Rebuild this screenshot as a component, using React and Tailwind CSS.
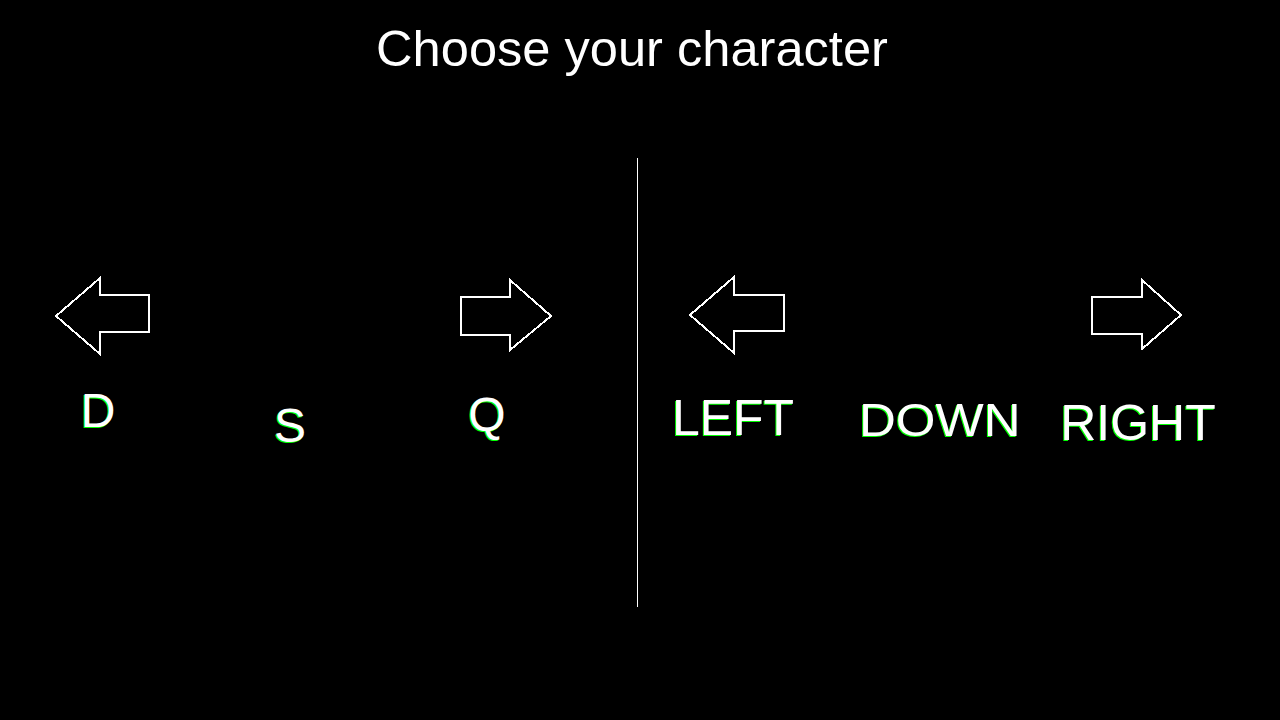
import React from "react";

const glow = "[text-shadow:-1px_1px_0_#00ff00]";

function Arrow({ points, w, h, className }) {
  return (
    <svg
      width={w}
      height={h}
      viewBox={`0 0 ${w} ${h}`}
      className={`shrink-0 ${className}`}
      shapeRendering="crispEdges"
    >
      <polygon points={points} fill="none" stroke="#fff" strokeWidth="2" strokeLinejoin="miter" />
    </svg>
  );
}

function App() {
  return (
    <div className="w-[1280px] h-[720px] bg-black overflow-hidden text-white font-['Liberation_Sans',Arial,sans-serif]">
      {/* title */}
      <div className="pt-[24px] w-[1264px] text-center text-[50.6px] leading-[50px]">
        Choose your character
      </div>

      {/* two players */}
      <div className="mt-[84px] flex h-[449px]">
        {/* player 1 */}
        <div className="w-[637px] flex flex-col pt-[117px]">
          <div className="flex items-start">
            <Arrow
              w={97}
              h={80}
              className="ml-[54px] mt-[1px]"
              points="2,40 46,2 46,19 95,19 95,56 46,56 46,78"
            />
            <Arrow
              w={94}
              h={74}
              className="ml-[308px] mt-[3px]"
              points="2,19 51,19 51,2 92,38 51,72 51,57 2,57"
            />
          </div>
          <div className={`flex items-start text-[48px] leading-none ${glow}`}>
            <div className="w-[100px] ml-[48px] mt-[31px] text-center">D</div>
            <div className="w-[100px] ml-[92px] mt-[46px] text-center">S</div>
            <div className="w-[100px] ml-[97px] mt-[35px] text-center">Q</div>
          </div>
        </div>

        <div className="w-px bg-white"></div>

        {/* player 2 */}
        <div className="flex-1 flex flex-col pt-[117px]">
          <div className="flex items-start">
            <Arrow
              w={97}
              h={80}
              className="ml-[50px]"
              points="2,40 46,2 46,20 96,20 96,56 46,56 46,78"
            />
            <Arrow
              w={93}
              h={72}
              className="ml-[305px] mt-[3px]"
              points="2,19 52,19 52,2 91,37 52,71 52,56 2,56"
            />
          </div>
          <div className={`flex items-start leading-none ${glow}`}>
            <div className="w-[140px] ml-[25px] mt-[38px] text-center text-[50px]">LEFT</div>
            <div className="w-[180px] ml-[47px] mt-[42px] text-center text-[46px]">
              <span className="inline-block scale-x-[1.11]">DOWN</span>
            </div>
            <div className="w-[180px] ml-[18px] mt-[43px] text-center text-[50px]">RIGHT</div>
          </div>
        </div>
      </div>
    </div>
  );
}

export default App;
